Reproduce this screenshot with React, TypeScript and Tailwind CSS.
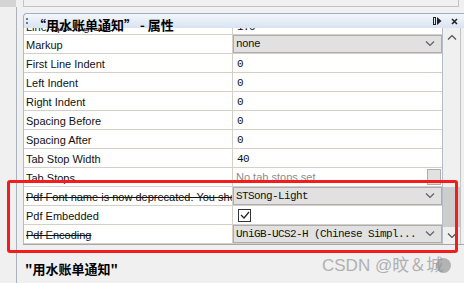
import React from "react";

const label = "font-['Liberation_Sans','Noto_Sans',sans-serif] text-[11px] text-[#111]";
const mono = "font-['Liberation_Mono',monospace] text-[11px] tracking-[-0.6px] text-[#111]";

type Row = {
  title: string;
  strike?: boolean;
  kind: "text" | "select" | "check" | "tabs";
  value?: string;
};

const rows: Row[] = [
  { title: "Markup", kind: "select", value: "none" },
  { title: "First Line Indent", kind: "text", value: "0" },
  { title: "Left Indent", kind: "text", value: "0" },
  { title: "Right Indent", kind: "text", value: "0" },
  { title: "Spacing Before", kind: "text", value: "0" },
  { title: "Spacing After", kind: "text", value: "0" },
  { title: "Tab Stop Width", kind: "text", value: "40" },
  { title: "Tab Stops", kind: "tabs" },
  {
    title: "Pdf Font name is now deprecated. You should use a font name instead",
    strike: true,
    kind: "select",
    value: "STSong-Light",
  },
  { title: "Pdf Embedded", kind: "check" },
  {
    title: "Pdf Encoding",
    strike: true,
    kind: "select",
    value: "UniGB-UCS2-H (Chinese Simpl...",
  },
];

function Chevron({ up = false, className = "" }: { up?: boolean; className?: string }) {
  return (
    <svg width="10" height="6" viewBox="0 0 10 6" className={className}>
      <path
        d={up ? "M1 5.5 L5 1.5 L9 5.5" : "M1 0.5 L5 4.5 L9 0.5"}
        fill="none"
        stroke="currentColor"
        strokeWidth="1.2"
      />
    </svg>
  );
}

function Value({ row }: { row: Row }) {
  if (row.kind === "select") {
    return (
      <div className="flex h-full w-full items-center justify-between border border-[#adadad] bg-[#e1e1e1] pl-[2px] pr-[6px]">
        <span className={`${mono} whitespace-nowrap`}>{row.value}</span>
        <Chevron className="text-[#606060]" />
      </div>
    );
  }
  if (row.kind === "check") {
    return (
      <div className="flex h-full items-center pl-[5px]">
        <div className="flex h-[13px] w-[13px] items-center justify-center border border-[#333] bg-white">
          <svg width="10" height="8" viewBox="0 0 10 8">
            <path d="M1 4 L4 7 L9 1" fill="none" stroke="#222" strokeWidth="1.2" />
          </svg>
        </div>
      </div>
    );
  }
  if (row.kind === "tabs") {
    return (
      <div className="flex h-full items-center justify-between pl-[3px] pr-[1px]">
        <span className={`${label} text-[#8c8c8c]!`}>No tab stops set</span>
        <div className="h-[16px] w-[14px] border border-[#adadad] bg-[#e1e1e1]" />
      </div>
    );
  }
  return (
    <div className="flex h-full items-center pl-[4px] pt-[2px]">
      <span className={mono}>{row.value}</span>
    </div>
  );
}

export default function App() {
  return (
    <div className="relative flex h-[283px] w-[464px] flex-col overflow-hidden bg-[#f0f0f0]">
      {/* top strip */}
      <div className="flex h-[7px] shrink-0">
        <div className="w-[16px] bg-[#d4d4d4]" />
        <div className="w-[7px]" />
        <div className="mr-[5px] flex-1 border-b border-l border-r border-[#c4c4c4] bg-[#f0f0f0]" />
      </div>

      <div className="flex flex-1">
        <div className="w-[16px]" />
        <div className="w-px bg-[#aab2be]" />
        <div className="w-[6px]" />

        <div className="flex flex-1 flex-col pt-[6px]">
          {/* header */}
          <div className="relative z-10 flex h-[15px] items-center rounded-tl-[4px] border-l border-t border-[#9fb1cb] bg-gradient-to-b from-[#f4f7fc] to-[#d8e3f2] pl-[2px] pr-[6px]">
            <div className="mr-[5px] flex flex-col gap-[2px]">
              <div className="h-[2px] w-[2px] bg-[#6a7a90]" />
              <div className="h-[2px] w-[2px] bg-[#6a7a90]" />
            </div>
            <span className="mt-[6px] font-['Noto_Sans_CJK_SC',sans-serif] text-[13px] leading-none font-bold text-black">
              “用水账单通知” - 属性
            </span>
            <div className="ml-auto flex items-center gap-[9px]">
              <svg width="9" height="8" viewBox="0 0 9 8">
                <rect x="0.5" y="0.5" width="2" height="7" fill="none" stroke="#222" />
                <path d="M4 0 L8.5 4 L4 8 Z" fill="#222" />
              </svg>
              <svg width="7" height="7" viewBox="0 0 7 7">
                <path d="M1 1 L6 6 M6 1 L1 6" stroke="#222" strokeWidth="1.6" />
              </svg>
            </div>
          </div>

          {/* table + scrollbar */}
          <div className="flex h-[217px] border-b border-[#a8a8a8]">
            <div className="flex w-[420px] flex-col border-l border-r border-[#b5bcc8] bg-white">
              <div className="flex h-[7px] overflow-hidden border-b border-[#d4d0c8]">
                <div className="-mt-[10px] flex h-[18px] w-[209px] items-center border-r border-[#d4d0c8] pl-[2px]">
                  <span className={label}>Line Spacing Size</span>
                </div>
                <div className="-mt-[10px] flex h-[18px] items-center pl-[4px]">
                  <span className={mono}>1.0</span>
                </div>
              </div>
              {rows.map((row, i) => (
                <div key={i} className="flex h-[19px] border-b border-[#d4d0c8]">
                  <div className="flex w-[209px] items-center overflow-hidden border-r border-[#d4d0c8] pl-[2px] pt-[2px]">
                    <span className={`${label} whitespace-nowrap ${row.strike ? "line-through" : ""}`}>
                      {row.title}
                    </span>
                  </div>
                  <div className="flex-1">
                    <Value row={row} />
                  </div>
                </div>
              ))}
            </div>

            {/* scrollbar */}
            <div className="flex w-[17px] flex-col bg-[#f0f0f0]">
              <div className="flex h-[17px] items-center justify-center text-[#505050]">
                <Chevron up />
              </div>
              <div className="flex flex-1 flex-col justify-end">
                <div className="h-[40px] bg-[#cdcdcd]" />
              </div>
              <div className="flex h-[17px] items-center justify-center text-[#505050]">
                <Chevron />
              </div>
            </div>
            <div className="w-px bg-[#c4c4c4]" />
          </div>

          {/* bottom description */}
          <div className="flex-1 pl-[2px] pt-[11px]">
            <span className="font-['Noto_Sans_CJK_SC',sans-serif] text-[13px] leading-none font-bold text-black">
              "用水账单通知"
            </span>
          </div>
        </div>
      </div>

      {/* red annotation box */}
      <div className="absolute left-[7px] top-[180px] h-[73px] w-[451px] rounded-[3px] border-[3px] border-[#f31d1d]" />

      {/* watermark */}
      <div className="absolute left-[322px] top-[257px] flex items-center font-['Liberation_Sans','Noto_Sans_CJK_SC',sans-serif] text-[17px] leading-none text-[#b0b0b0]">
        CSDN @旼＆城
        <span className="-ml-[7px] h-[15px] w-[15px] rounded-full bg-[#8a8a8a] opacity-60" />
      </div>
    </div>
  );
}
